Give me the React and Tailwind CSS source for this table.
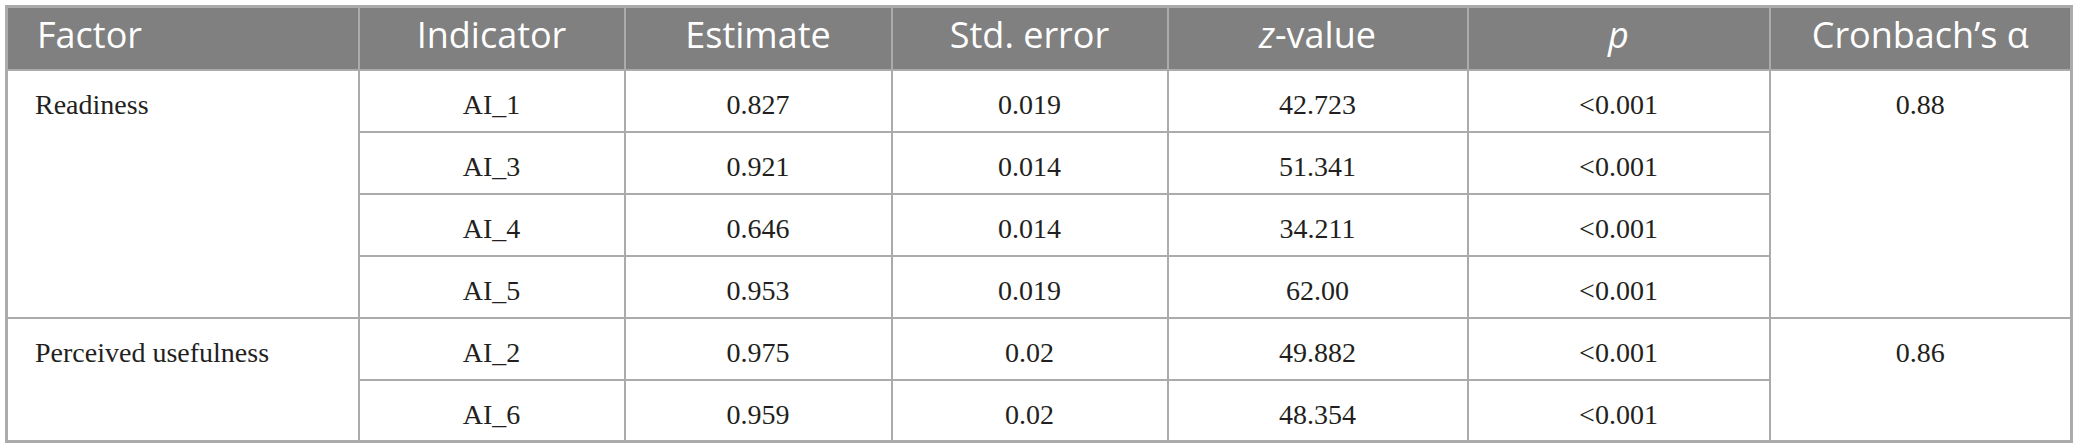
const rows = [
  { factor: "Readiness", span: 4, alpha: "0.88", ind: "AI_1", est: "0.827", se: "0.019", z: "42.723", p: "<0.001" },
  { ind: "AI_3", est: "0.921", se: "0.014", z: "51.341", p: "<0.001" },
  { ind: "AI_4", est: "0.646", se: "0.014", z: "34.211", p: "<0.001" },
  { ind: "AI_5", est: "0.953", se: "0.019", z: "62.00", p: "<0.001" },
  { factor: "Perceived usefulness", span: 2, alpha: "0.86", ind: "AI_2", est: "0.975", se: "0.02", z: "49.882", p: "<0.001" },
  { ind: "AI_6", est: "0.959", se: "0.02", z: "48.354", p: "<0.001" },
];

const th = "border-2 border-[#ababab] bg-[#808080] text-white font-normal text-[36px] leading-[40px] align-top pt-[7px] text-center";
const td = "border-2 border-[#ababab] text-[28px] leading-[32px] align-top pt-[18px] text-center";

export default function App() {
  return (
    <div className="min-h-screen bg-white pt-[5px] pl-[5px]">
      <table
        className="table-fixed border-collapse border-[3px] border-[#ababab] w-[2065px] text-[#231f20]"
        style={{ fontFamily: "'Liberation Serif', serif" }}
      >
        <colgroup>
          <col className="w-[352px]" />
          <col className="w-[266px]" />
          <col className="w-[267px]" />
          <col className="w-[276px]" />
          <col className="w-[300px]" />
          <col className="w-[302px]" />
          <col className="w-[302px]" />
        </colgroup>
        <thead style={{ fontFamily: "'Open Sans', sans-serif" }}>
          <tr className="h-[63px]">
            <th className={th + " !text-left pl-[29px]"}>Factor</th>
            <th className={th}>Indicator</th>
            <th className={th}>Estimate</th>
            <th className={th}>Std. error</th>
            <th className={th}><i>z</i>-value</th>
            <th className={th}><i>p</i></th>
            <th className={th}>Cronbach’s α</th>
          </tr>
        </thead>
        <tbody>
          {rows.map((r, i) => (
            <tr key={i} className="h-[62px]">
              {r.factor && (
                <td rowSpan={r.span} className={td + " !text-left pl-[27px]"}>{r.factor}</td>
              )}
              <td className={td}>{r.ind}</td>
              <td className={td}>{r.est}</td>
              <td className={td}>{r.se}</td>
              <td className={td}>{r.z}</td>
              <td className={td}>{r.p}</td>
              {r.alpha && (
                <td rowSpan={r.span} className={td}>{r.alpha}</td>
              )}
            </tr>
          ))}
        </tbody>
      </table>
    </div>
  );
}
